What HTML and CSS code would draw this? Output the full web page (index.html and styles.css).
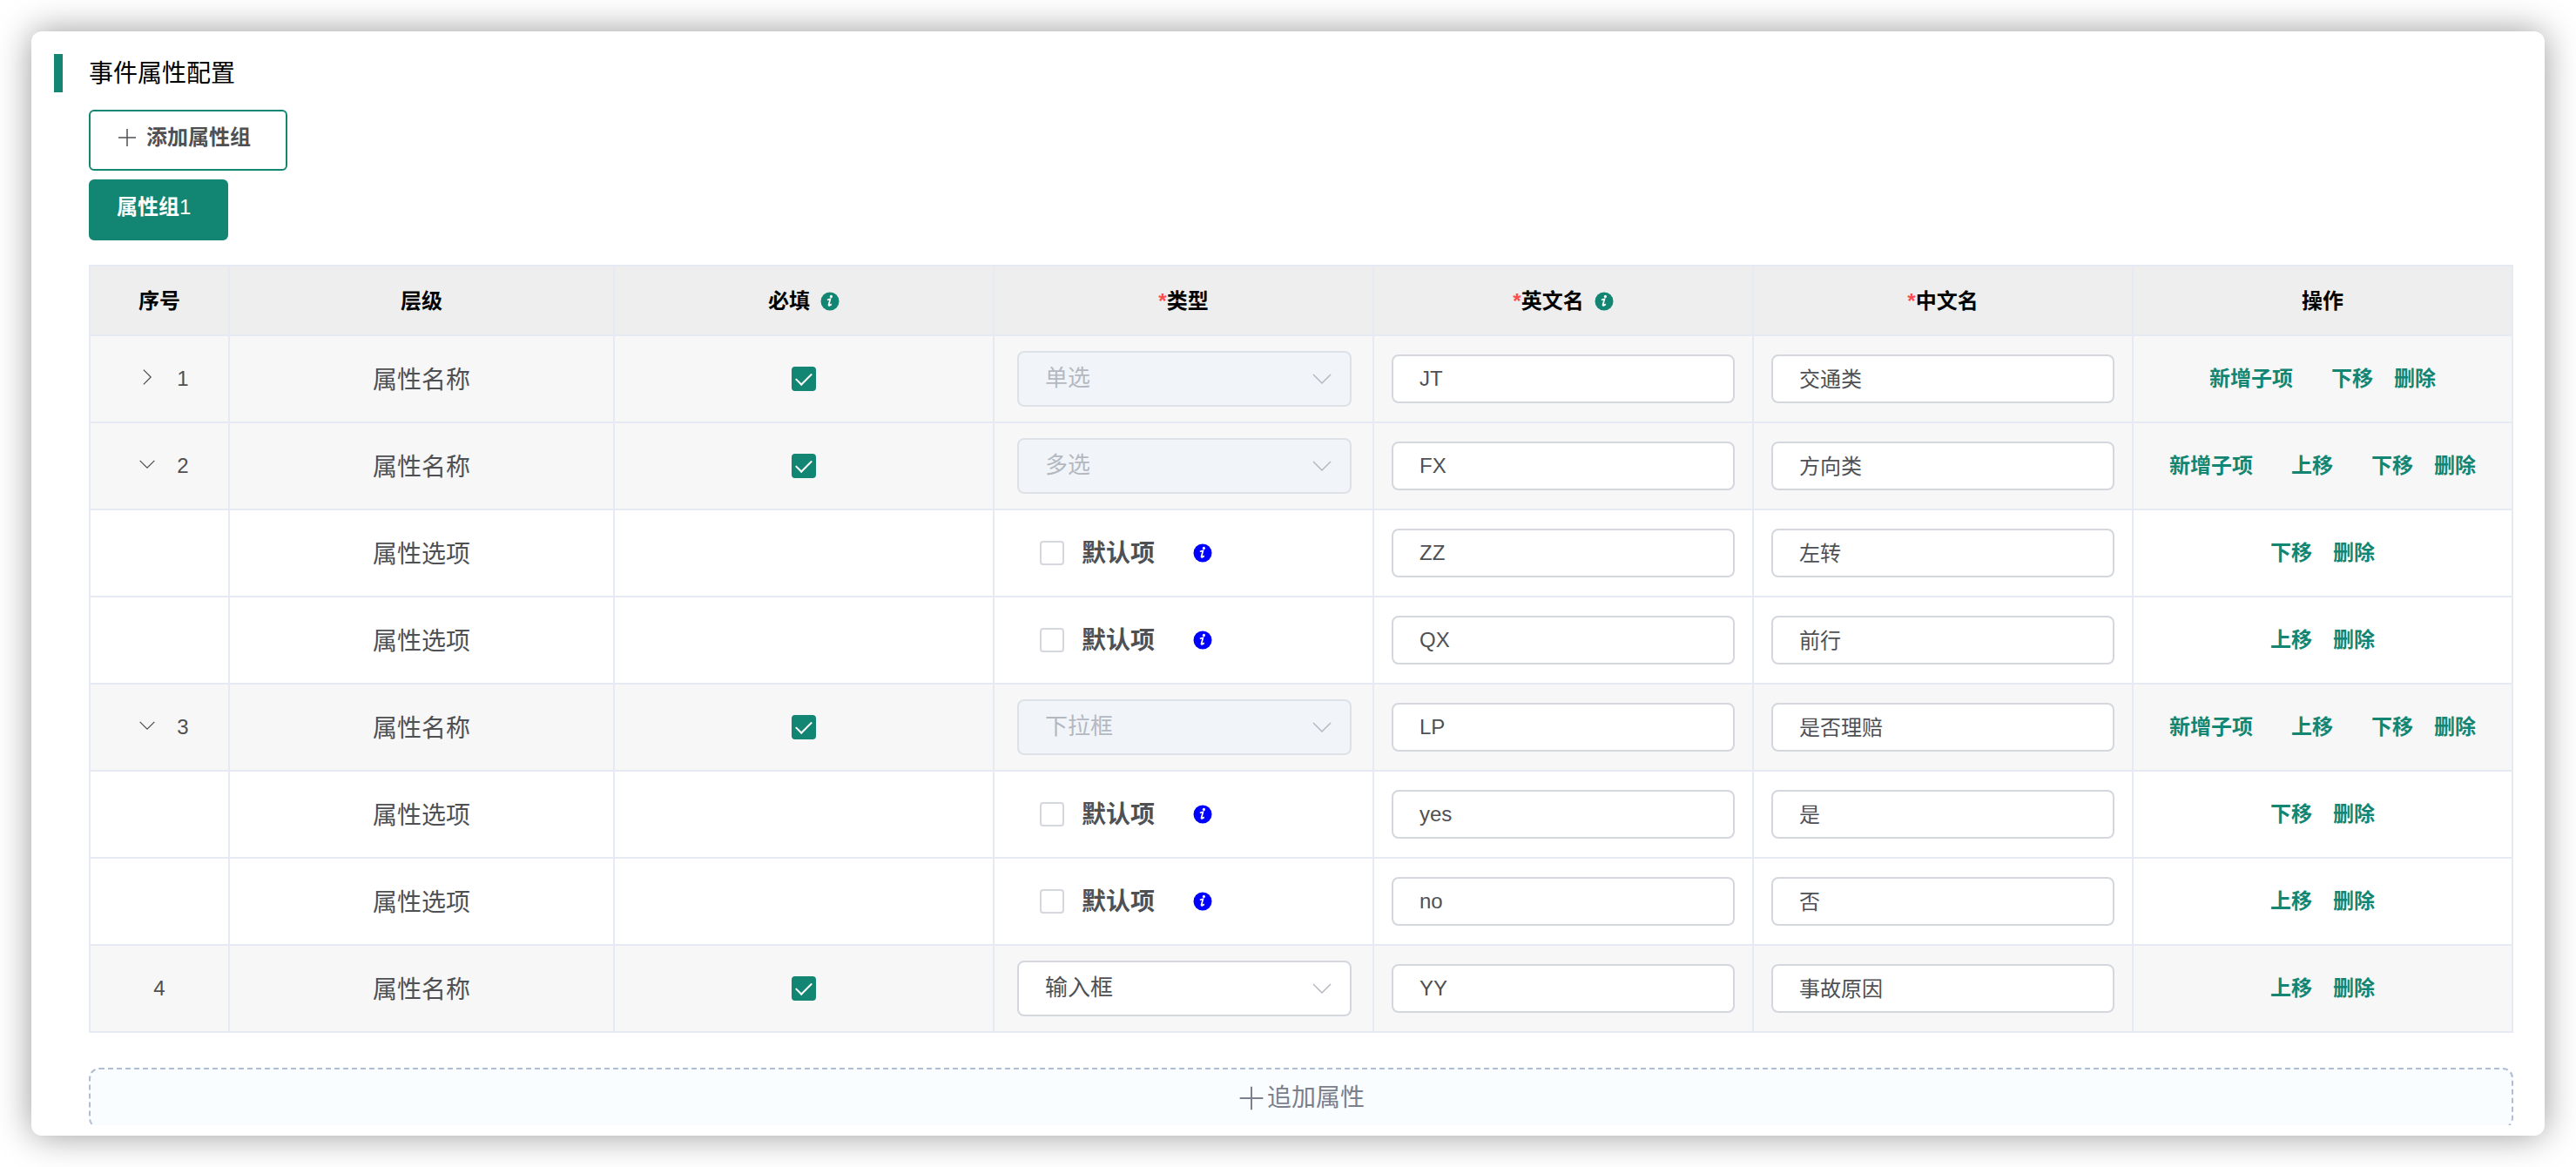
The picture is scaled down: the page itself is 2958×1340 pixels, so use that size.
FILE: index.html
```
<!DOCTYPE html>
<html lang="zh-CN">
<head>
<meta charset="utf-8">
<title>事件属性配置</title>
<link rel="stylesheet" href="styles.css">
</head>
<body>
<svg class="sprite" aria-hidden="true">
  <symbol id="plus" viewBox="0 0 24 24"><path d="M12 2v20M2 12h20" fill="none" stroke="currentColor" stroke-width="1.5"/></symbol>
  <symbol id="down" viewBox="0 0 24 24"><path d="M2 7l10 10L22 7" fill="none" stroke="currentColor" stroke-width="1.5"/></symbol>
  <symbol id="right" viewBox="0 0 24 24"><path d="M7 2l10 10L7 22" fill="none" stroke="currentColor" stroke-width="1.5"/></symbol>
  <symbol id="info" viewBox="0 0 22 22"><circle cx="11" cy="11" r="10.5" fill="currentColor"/><circle cx="12.4" cy="5.4" r="1.6" fill="#fff"/><path d="M8 9.6q1.6-1 3.4-1.2L9.6 15q-.4 2 3.2-.8" fill="none" stroke="#fff" stroke-width="1.8"/></symbol>
</svg>
<main class="card">
  <header class="heading"><h1 class="title">事件属性配置</h1></header>
  <div class="content">
    <div class="groups">
      <button type="button" class="group-button group-add"><svg class="icon"><use href="#plus"/></svg>添加属性组</button>
      <button type="button" class="group-button group-active">属性组<span class="group-number">1</span></button>
    </div>
    <table class="table">
      <colgroup><col class="col-index"><col class="col-level"><col><col><col><col><col></colgroup>
      <thead>
        <tr>
          <th>序号</th>
          <th>层级</th>
          <th>必填<svg class="info info-head"><use href="#info"/></svg></th>
          <th><span class="star">*</span>类型</th>
          <th><span class="star">*</span>英文名<svg class="info info-head"><use href="#info"/></svg></th>
          <th><span class="star">*</span>中文名</th>
          <th>操作</th>
        </tr>
      </thead>
      <tbody>
        <tr class="parent">
          <td><button type="button" class="toggle" aria-label="展开"><svg class="arrow"><use href="#right"/></svg></button>1</td>
          <td class="level">属性名称</td>
          <td><input type="checkbox" class="check" aria-label="必填" checked></td>
          <td class="type"><div class="select-box"><select class="select" aria-label="类型" disabled><option>单选</option></select><svg class="caret"><use href="#down"/></svg></div></td>
          <td class="field"><input type="text" class="input" aria-label="英文名" value="JT"></td>
          <td class="field"><input type="text" class="input input-cn" aria-label="中文名" value="交通类"></td>
          <td><div class="actions"><button type="button" class="action wide">新增子项</button><button type="button" class="action">下移</button><button type="button" class="action">删除</button></div></td>
        </tr>
        <tr class="parent">
          <td><button type="button" class="toggle" aria-label="收起"><svg class="arrow"><use href="#down"/></svg></button>2</td>
          <td class="level">属性名称</td>
          <td><input type="checkbox" class="check" aria-label="必填" checked></td>
          <td class="type"><div class="select-box"><select class="select" aria-label="类型" disabled><option>多选</option></select><svg class="caret"><use href="#down"/></svg></div></td>
          <td class="field"><input type="text" class="input" aria-label="英文名" value="FX"></td>
          <td class="field"><input type="text" class="input input-cn" aria-label="中文名" value="方向类"></td>
          <td><div class="actions"><button type="button" class="action wide">新增子项</button><button type="button" class="action wide">上移</button><button type="button" class="action">下移</button><button type="button" class="action">删除</button></div></td>
        </tr>
        <tr>
          <td></td>
          <td class="level">属性选项</td>
          <td></td>
          <td class="type"><div class="default"><label class="default-label"><input type="checkbox" class="check"><span class="default-text">默认项</span></label><svg class="info info-blue"><use href="#info"/></svg></div></td>
          <td class="field"><input type="text" class="input" aria-label="英文名" value="ZZ"></td>
          <td class="field"><input type="text" class="input input-cn" aria-label="中文名" value="左转"></td>
          <td><div class="actions"><button type="button" class="action">下移</button><button type="button" class="action">删除</button></div></td>
        </tr>
        <tr>
          <td></td>
          <td class="level">属性选项</td>
          <td></td>
          <td class="type"><div class="default"><label class="default-label"><input type="checkbox" class="check"><span class="default-text">默认项</span></label><svg class="info info-blue"><use href="#info"/></svg></div></td>
          <td class="field"><input type="text" class="input" aria-label="英文名" value="QX"></td>
          <td class="field"><input type="text" class="input input-cn" aria-label="中文名" value="前行"></td>
          <td><div class="actions"><button type="button" class="action">上移</button><button type="button" class="action">删除</button></div></td>
        </tr>
        <tr class="parent">
          <td><button type="button" class="toggle" aria-label="收起"><svg class="arrow"><use href="#down"/></svg></button>3</td>
          <td class="level">属性名称</td>
          <td><input type="checkbox" class="check" aria-label="必填" checked></td>
          <td class="type"><div class="select-box"><select class="select" aria-label="类型" disabled><option>下拉框</option></select><svg class="caret"><use href="#down"/></svg></div></td>
          <td class="field"><input type="text" class="input" aria-label="英文名" value="LP"></td>
          <td class="field"><input type="text" class="input input-cn" aria-label="中文名" value="是否理赔"></td>
          <td><div class="actions"><button type="button" class="action wide">新增子项</button><button type="button" class="action wide">上移</button><button type="button" class="action">下移</button><button type="button" class="action">删除</button></div></td>
        </tr>
        <tr>
          <td></td>
          <td class="level">属性选项</td>
          <td></td>
          <td class="type"><div class="default"><label class="default-label"><input type="checkbox" class="check"><span class="default-text">默认项</span></label><svg class="info info-blue"><use href="#info"/></svg></div></td>
          <td class="field"><input type="text" class="input" aria-label="英文名" value="yes"></td>
          <td class="field"><input type="text" class="input input-cn" aria-label="中文名" value="是"></td>
          <td><div class="actions"><button type="button" class="action">下移</button><button type="button" class="action">删除</button></div></td>
        </tr>
        <tr>
          <td></td>
          <td class="level">属性选项</td>
          <td></td>
          <td class="type"><div class="default"><label class="default-label"><input type="checkbox" class="check"><span class="default-text">默认项</span></label><svg class="info info-blue"><use href="#info"/></svg></div></td>
          <td class="field"><input type="text" class="input" aria-label="英文名" value="no"></td>
          <td class="field"><input type="text" class="input input-cn" aria-label="中文名" value="否"></td>
          <td><div class="actions"><button type="button" class="action">上移</button><button type="button" class="action">删除</button></div></td>
        </tr>
        <tr class="parent">
          <td>4</td>
          <td class="level">属性名称</td>
          <td><input type="checkbox" class="check" aria-label="必填" checked></td>
          <td class="type"><div class="select-box"><select class="select" aria-label="类型"><option>输入框</option></select><svg class="caret"><use href="#down"/></svg></div></td>
          <td class="field"><input type="text" class="input" aria-label="英文名" value="YY"></td>
          <td class="field"><input type="text" class="input input-cn" aria-label="中文名" value="事故原因"></td>
          <td><div class="actions"><button type="button" class="action">上移</button><button type="button" class="action">删除</button></div></td>
        </tr>
      </tbody>
    </table>
    <button type="button" class="append"><svg class="append-icon"><use href="#plus"/></svg>追加属性</button>
  </div>
</main>
</body>
</html>
```
FILE: styles.css
```
* { box-sizing: border-box; }

body {
  margin: 0;
  padding: 36px;
  height: 100vh;
  display: flex;
  background: #fff;
  color: #4e5054;
  font: 24px/36px "Liberation Sans", "Noto Sans CJK SC", sans-serif;
}

button, input, select { font: inherit; color: inherit; margin: 0; }
button { cursor: pointer; }

.sprite { position: absolute; width: 0; height: 0; }

.card {
  flex: 1;
  min-width: 0;
  display: flex;
  flex-direction: column;
  padding: 26px 36px 12px 26px;
  border-radius: 12px;
  background: #fff;
  box-shadow: 0 0 40px rgba(0, 0, 0, .4);
}

.heading {
  border-left: 10px solid #128672;
  padding: 2px 0 0 30px;
  margin-bottom: 20px;
}
.title {
  margin: 0;
  font-size: 28px;
  line-height: 42px;
  font-weight: 400;
  color: #000;
}

.content {
  flex: 1;
  min-height: 0;
  overflow: hidden;
  padding-left: 40px;
}

.groups {
  display: flex;
  flex-direction: column;
  align-items: flex-start;
  gap: 10px;
  margin-bottom: 28px;
}
.group-button {
  display: flex;
  align-items: center;
  height: 70px;
  min-width: 160px;
  padding: 0 40px 6px 30px;
  border: 2px solid #128672;
  border-radius: 6px;
  background: #fff;
  font-weight: 700;
}
.group-active { background: #128672; color: #fff; }
.group-number { font-weight: 400; }
.icon { width: 24px; height: 24px; margin-right: 10px; }

.table {
  width: 100%;
  table-layout: fixed;
  border-collapse: separate;
  border-spacing: 0;
  border: solid #e6eaf3;
  border-width: 2px 0 0 2px;
}
.col-index { width: 160px; }
.col-level { width: 442px; }
.table th, .table td {
  height: 100px;
  padding: 0;
  border: solid #e6eaf3;
  border-width: 0 2px 2px 0;
  text-align: center;
  vertical-align: middle;
}
.table th {
  height: 80px;
  padding-top: 2px;
  background: #eee;
  color: #000;
  font-weight: 700;
}
.parent td { background: #f7f7f7; }
.star { color: #ff4d4f; }
.table .level { font-size: 28px; padding-top: 4px; }
.table .type { padding: 0 24px 0 26px; }
.table .field { padding: 0 20px; }

.info { width: 22px; height: 22px; }
.info-head { margin-left: 12px; vertical-align: -3px; color: #128672; }
.info-blue { color: #00f; }

.toggle {
  padding: 0;
  border: 0;
  background: none;
  margin: 0 24px 0 10px;
}
.arrow { display: block; width: 20px; height: 20px; }

.check {
  appearance: none;
  display: grid;
  place-items: center;
  width: 28px;
  height: 28px;
  margin: 0 auto;
  border: 2px solid #d4d7de;
  border-radius: 4px;
  background: #fff;
}
.check:checked { background: #128672; border-color: #128672; }
.check:checked::after {
  content: "";
  width: 8px;
  height: 16px;
  margin-bottom: 4px;
  border: solid #fff;
  border-width: 0 2px 2px 0;
  transform: rotate(45deg);
}

.select-box { position: relative; }
.select {
  appearance: none;
  display: block;
  width: 100%;
  height: 64px;
  padding: 0 60px 2px 30px;
  border: 2px solid #d4d7de;
  border-radius: 8px;
  background: #fff;
  font-size: 26px;
}
.select:disabled {
  background: #f1f5fa;
  border-color: #dde1e8;
  color: #b4b8c0;
  opacity: 1;
}
.caret {
  position: absolute;
  right: 22px;
  top: 20px;
  width: 24px;
  height: 24px;
  color: #b4b8c0;
  pointer-events: none;
}

.input {
  display: block;
  width: 100%;
  height: 56px;
  padding: 0 30px;
  border: 2px solid #d4d7de;
  border-radius: 8px;
  background: #fff;
}
.input-cn { padding-bottom: 4px; }

.default { display: flex; align-items: center; gap: 44px; padding-left: 26px; }
.default-label {
  display: flex;
  align-items: center;
  gap: 20px;
  font-size: 28px;
  font-weight: 700;
}
.default-text { padding-top: 2px; }

.actions { display: flex; justify-content: center; gap: 24px; }
.action {
  padding: 0;
  border: 0;
  background: none;
  color: #128672;
  font-weight: 700;
}
.action.wide { margin-right: 20px; }

.append {
  display: flex;
  align-items: center;
  justify-content: center;
  gap: 2px;
  width: 100%;
  height: 70px;
  margin-top: 40px;
  border: 2px dashed #b0bdd3;
  border-radius: 12px;
  background: #f9fdff;
  color: #7a808c;
  font-size: 28px;
}
.append-icon { width: 32px; height: 32px; }
```
